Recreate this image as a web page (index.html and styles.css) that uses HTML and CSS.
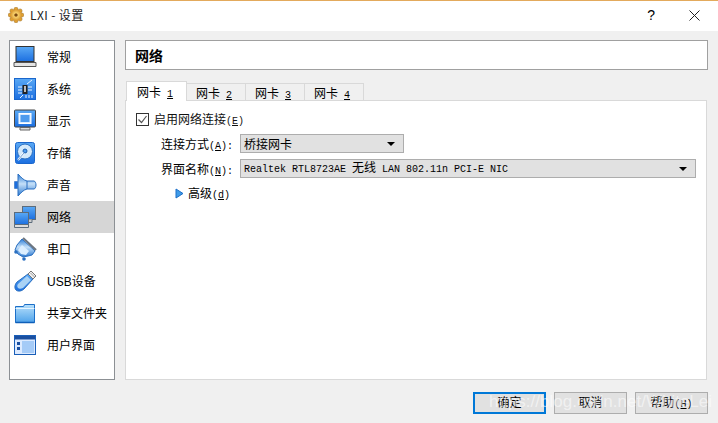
FILE: index.html
```html
<!DOCTYPE html>
<html lang="zh-CN">
<head>
  <meta charset="UTF-8">
  <title>LXI - 设置</title>
  <link rel="stylesheet" href="styles.css">
</head>
<body>
  <svg class="defs" width="0" height="0">
    <defs>
      <linearGradient id="blue" x1="0" y1="0" x2="0" y2="1"><stop offset="0" stop-color="#5aa9f5"/><stop offset="1" stop-color="#1c6fe0"/></linearGradient>
      <linearGradient id="cone" x1="0" y1="0" x2="0" y2="1"><stop offset="0" stop-color="#2f7fd8"/><stop offset="0.45" stop-color="#c5e0f8"/><stop offset="1" stop-color="#2a78d2"/></linearGradient>
      <linearGradient id="folder" x1="0" y1="0" x2="0" y2="1"><stop offset="0" stop-color="#b8e0fb"/><stop offset="1" stop-color="#4fa3ea"/></linearGradient>
      <radialGradient id="gold"><stop offset="0" stop-color="#a8641a"/><stop offset="0.4" stop-color="#f6cf6c"/><stop offset="1" stop-color="#d9972e"/></radialGradient>
    </defs>
  </svg>

  <div class="titlebar">
    <svg class="app-icon" width="16" height="16" viewBox="0 0 16 16">
      <g fill="#e0a030" stroke="#9a6a20" stroke-width="0.5">
        <circle cx="8" cy="2.200" r="2"/><circle cx="8" cy="13.800" r="2"/><circle cx="2.200" cy="8" r="2"/><circle cx="13.800" cy="8" r="2"/>
        <circle cx="3.900" cy="3.900" r="2"/><circle cx="12.100" cy="3.900" r="2"/><circle cx="3.900" cy="12.100" r="2"/><circle cx="12.100" cy="12.100" r="2"/>
      </g>
      <circle cx="8" cy="8" r="5.500" fill="url(#gold)"/>
      <circle cx="8" cy="8" r="1.600" fill="#7a4a12"/>
    </svg>
    <span class="title-text">LXI - 设置</span>
    <span class="title-help">?</span>
    <svg class="title-close" width="11" height="11" viewBox="0 0 11 11"><path d="M0.500 0.500L10.500 10.500M10.500 0.500L0.500 10.500" stroke="#222" stroke-width="1" fill="none"/></svg>
  </div>

  <div class="main">
    <div class="sidebar">
      <div class="nav-item">
        <svg class="nav-icon" width="24" height="24" viewBox="0 0 24 24"><rect x="3" y="1.500" width="18" height="15" fill="url(#blue)" stroke="#333"/><path d="M1 17.500h22v4H1z" fill="#e4e4e4" stroke="#555"/></svg>
        <span>常规</span>
      </div>
      <div class="nav-item">
        <svg class="nav-icon" width="24" height="24" viewBox="0 0 24 24"><rect x="1.500" y="1.500" width="21" height="21" fill="url(#blue)" stroke="#1a66cc"/><rect x="9.500" y="8" width="5" height="9" fill="#222"/><rect x="11" y="9" width="2" height="6" fill="#bbb"/><path d="M5 10h4M5 13h4M5 16h4M15 10h4M15 13h4M7 21l3-3M14 7l5-4M13 18v3M16 18v3M19 18v3" stroke="#e6f2ff" stroke-width="1" fill="none"/></svg>
        <span>系统</span>
      </div>
      <div class="nav-item">
        <svg class="nav-icon" width="24" height="24" viewBox="0 0 24 24"><rect x="1.500" y="1" width="21" height="17" rx="1" fill="url(#blue)" stroke="#444"/><rect x="6" y="4.500" width="12" height="10" fill="#dcecff" stroke="#fff"/><rect x="7.500" y="6" width="9" height="7" fill="#4d9bee"/><path d="M7 18.500h10v2.500H7z" fill="#ddd" stroke="#666"/></svg>
        <span>显示</span>
      </div>
      <div class="nav-item">
        <svg class="nav-icon" width="24" height="24" viewBox="0 0 24 24"><rect x="2.500" y="1.500" width="19" height="21" rx="2" fill="url(#blue)" stroke="#1a66cc"/><circle cx="12" cy="10.500" r="7.500" fill="#d4e9fb" stroke="#2a6fc0"/><circle cx="12" cy="10" r="2" fill="#4d9bee" stroke="#1a5fb0"/><path d="M5 19l6-7" stroke="#fff" stroke-width="2"/><path d="M5 19l6-7" stroke="#2a6fc0" stroke-width="0.700"/></svg>
        <span>存储</span>
      </div>
      <div class="nav-item">
        <svg class="nav-icon" width="24" height="24" viewBox="0 0 24 24"><path d="M5 1c3 3 5 6 9 7h7c1 0 2 2 2 4s-1 4-2 4h-7c-4 1-6 4-9 7z" fill="url(#cone)" stroke="#2a6fc0"/><path d="M1.500 8.500h3v7h-3z" fill="#1c6fe0" stroke="#1a5fb0" stroke-width="0.500"/><path d="M14 8v8" stroke="#2a6fc0"/></svg>
        <span>声音</span>
      </div>
      <div class="nav-item selected">
        <svg class="nav-icon" width="24" height="24" viewBox="0 0 24 24"><rect x="9.500" y="1.500" width="13" height="13" fill="url(#blue)" stroke="#5c6c7c"/><path d="M12 14.500v3h7v-3" fill="#ccc" stroke="#5c6c7c"/><rect x="1.500" y="7.500" width="14" height="12" fill="url(#blue)" stroke="#5c6c7c"/><path d="M1.500 19.500h14v3h-14z" fill="#ddd" stroke="#5c6c7c"/></svg>
        <span>网络</span>
      </div>
      <div class="nav-item">
        <svg class="nav-icon" width="24" height="24" viewBox="0 0 24 24"><path d="M9 2l13 12-3 4-4 1-5 1-5-3-3-4 2-5z" fill="url(#cone)" stroke="#2a6fc0"/><path d="M10 1l13 12" stroke="#6b7580" stroke-width="2.200"/><path d="M9 8l7 6-3 4-5-1-3-4z" fill="#dbeeff"/><circle cx="3" cy="15" r="1.800" fill="#2a6fc0"/><circle cx="11" cy="22" r="1.800" fill="#2a6fc0"/></svg>
        <span>串口</span>
      </div>
      <div class="nav-item">
        <svg class="nav-icon" width="24" height="24" viewBox="0 0 24 24"><path d="M15 5l5 5-9 10c-2 2-6 3-8 1s-1-6 1-8z" fill="url(#blue)" stroke="#2a6fc0"/><path d="M14 7l4 4-8 8c-2 1-4 1-5 0s-1-3 0-4z" fill="#a9d2f5"/><path d="M15 5l3-3 5 5-3 3z" fill="#eee" stroke="#777"/><path d="M18 4.500l1 1M20 6.500l1 1" stroke="#555"/></svg>
        <span class="latin">USB<span class="cjk">设备</span></span>
      </div>
      <div class="nav-item">
        <svg class="nav-icon" width="24" height="24" viewBox="0 0 24 24"><path d="M2.500 5.500h8l1-2h10v18h-19z" fill="url(#folder)" stroke="#1c6fc8"/><path d="M2.500 7.500h19" stroke="#e8f5ff"/><path d="M2.500 21.500h19" stroke="#0f5fb8" stroke-width="1.500"/></svg>
        <span>共享文件夹</span>
      </div>
      <div class="nav-item">
        <svg class="nav-icon" width="24" height="24" viewBox="0 0 24 24"><rect x="1.500" y="2.500" width="21" height="19" fill="#dceaff" stroke="#1a5fb8"/><rect x="2" y="3" width="20" height="3.500" fill="#1a4fa0"/><rect x="9" y="8" width="12" height="12" fill="#a5cbf7"/><rect x="4" y="9" width="3" height="3" fill="#1a4fa0"/><rect x="4" y="14" width="3" height="3" fill="#1a4fa0"/></svg>
        <span>用户界面</span>
      </div>
    </div>

    <div class="content">
      <div class="page-head">网络</div>

      <div class="tabs">
        <div class="tab active">网卡<span class="m"> <u>1</u></span></div>
        <div class="tab">网卡<span class="m"> <u>2</u></span></div>
        <div class="tab">网卡<span class="m"> <u>3</u></span></div>
        <div class="tab">网卡<span class="m"> <u>4</u></span></div>
      </div>

      <div class="panel">
        <div class="check-row">
          <svg class="check" width="13" height="13" viewBox="0 0 13 13"><rect x="0.500" y="0.500" width="12" height="12" fill="#fff" stroke="#333"/><path d="M2.500 6.500l3 3 5-6.500" stroke="#555" stroke-width="1.200" fill="none"/></svg>
          <span>启用网络连接<span class="m">(<u>E</u>)</span></span>
        </div>
        <div class="form">
          <label>连接方式<span class="m">(<u>A</u>):</span></label>
          <div class="combo short"><span>桥接网卡</span><i class="arrow"></i></div>
          <label>界面名称<span class="m">(<u>N</u>):</span></label>
          <div class="combo"><span class="m">Realtek RTL8723AE <span class="cjk">无线</span> LAN 802.11n PCI-E NIC</span><i class="arrow"></i></div>
        </div>
        <div class="advanced">
          <svg width="9" height="11" viewBox="0 0 9 11"><path d="M1 1l7 4.500-7 4.500z" fill="#3f9be8" stroke="#1c6fc8"/></svg>
          <span>高级<span class="m">(<u>d</u>)</span></span>
        </div>
      </div>
    </div>
  </div>

  <div class="footer">
    <button class="btn default">确定</button>
    <button class="btn">取消</button>
    <button class="btn">帮助<span class="m">(<u>H</u>)</span></button>
  </div>

  <div class="watermark">https://blog.csdn.net/WhiteLei</div>
</body>
</html>
```

FILE: styles.css
```css
* {
  box-sizing: border-box;
}
html, body {
  margin: 0;
  padding: 0;
}
body {
  position: relative;
  width: 718px;
  height: 423px;
  overflow: hidden;
  background-color: #f0f0f0;
  color: #000;
  font-family: "Noto Sans CJK SC", "Liberation Sans", sans-serif;
  font-size: 12px;
  line-height: 16px;
}
.defs {
  position: absolute;
}
.m {
  font-family: "Liberation Mono", "Noto Sans CJK SC", monospace;
  font-size: 10px;
  line-height: 10px;
}
.cjk {
  font-family: "Noto Sans CJK SC", sans-serif;
  font-size: 12px;
}
.latin {
  font-family: "Liberation Sans", "Noto Sans CJK SC", sans-serif;
}

/* title bar */
.titlebar {
  display: flex;
  align-items: center;
  height: 31px;
  padding: 0 18px 2px 8px;
  background-color: #fff;
  border-top: 1px solid #e3aa5c;
}
.title-text {
  margin-left: 6px;
  flex-grow: 1;
  font-size: 12px;
  letter-spacing: 0.4px;
  color: #222;
}
.title-help {
  margin-right: 34px;
  font-family: "Liberation Sans", sans-serif;
  font-size: 14px;
}

/* main area */
.main {
  display: flex;
  gap: 10px;
  height: 349px;
  padding: 9px 10px 0 9px;
}
.sidebar {
  width: 106px;
  height: 340px;
  background-color: #fff;
  border: 1px solid #8c9094;
}
.nav-item {
  display: flex;
  align-items: center;
  gap: 10px;
  height: 32px;
  padding-left: 3px;
}
.nav-item.selected {
  background-color: #d6d6d6;
}
.nav-icon {
  flex-shrink: 0;
}
.content {
  width: 583px;
}
.page-head {
  height: 30px;
  padding-left: 9px;
  background-color: #fff;
  border: 1px solid #a0a0a0;
  font-size: 14px;
  font-weight: bold;
  line-height: 28px;
}

/* tabs */
.tabs {
  display: flex;
  align-items: flex-end;
  height: 19px;
  margin-top: 11px;
  padding-left: 1px;
}
.tab {
  width: 59px;
  height: 17px;
  padding-left: 9px;
  background-color: #f0f0f0;
  border: 1px solid #d9d9d9;
  border-left: none;
  border-bottom: none;
  line-height: 17px;
}
.tab.active {
  position: relative;
  width: 61px;
  height: 20px;
  margin-bottom: -1px;
  padding-left: 10px;
  background-color: #fff;
  border-left: 1px solid #d9d9d9;
  line-height: 19px;
}
.panel {
  width: 582px;
  height: 280px;
  padding: 10px 10px 0 10px;
  background-color: #fff;
  border: 1px solid #d9d9d9;
}
.check-row {
  display: flex;
  align-items: center;
  gap: 5px;
  height: 16px;
  color: #111;
}
.form {
  display: grid;
  grid-template-columns: 79px 1fr;
  row-gap: 6px;
  align-items: center;
  margin-top: 7px;
  padding-left: 25px;
}
.combo {
  display: flex;
  align-items: center;
  justify-content: space-between;
  width: 456px;
  height: 19px;
  padding: 0 8px 0 3px;
  background-color: #e1e1e1;
  border: 1px solid #adadad;
}
.combo.short {
  width: 164px;
}
.arrow {
  width: 0;
  height: 0;
  border-left: 4px solid transparent;
  border-right: 4px solid transparent;
  border-top: 4px solid #000;
}
.advanced {
  display: flex;
  align-items: center;
  gap: 4px;
  margin-top: 7px;
  padding-left: 39px;
}

/* buttons */
.footer {
  display: flex;
  justify-content: flex-end;
  gap: 8px;
  padding: 12px 10px 0 0;
}
.btn {
  width: 73px;
  height: 22px;
  padding: 0 0 2px;
  background-color: #e1e1e1;
  border: 1px solid #adadad;
  font-family: inherit;
  font-size: 12px;
  line-height: 16px;
  color: #000;
}
.btn.default {
  border: 2px solid #0078d7;
}
.watermark {
  position: absolute;
  left: 489px;
  top: 393px;
  font-family: "Liberation Sans", sans-serif;
  font-size: 17px;
  line-height: 18px;
  white-space: nowrap;
  color: rgba(255, 255, 255, 0.55);
}
```
